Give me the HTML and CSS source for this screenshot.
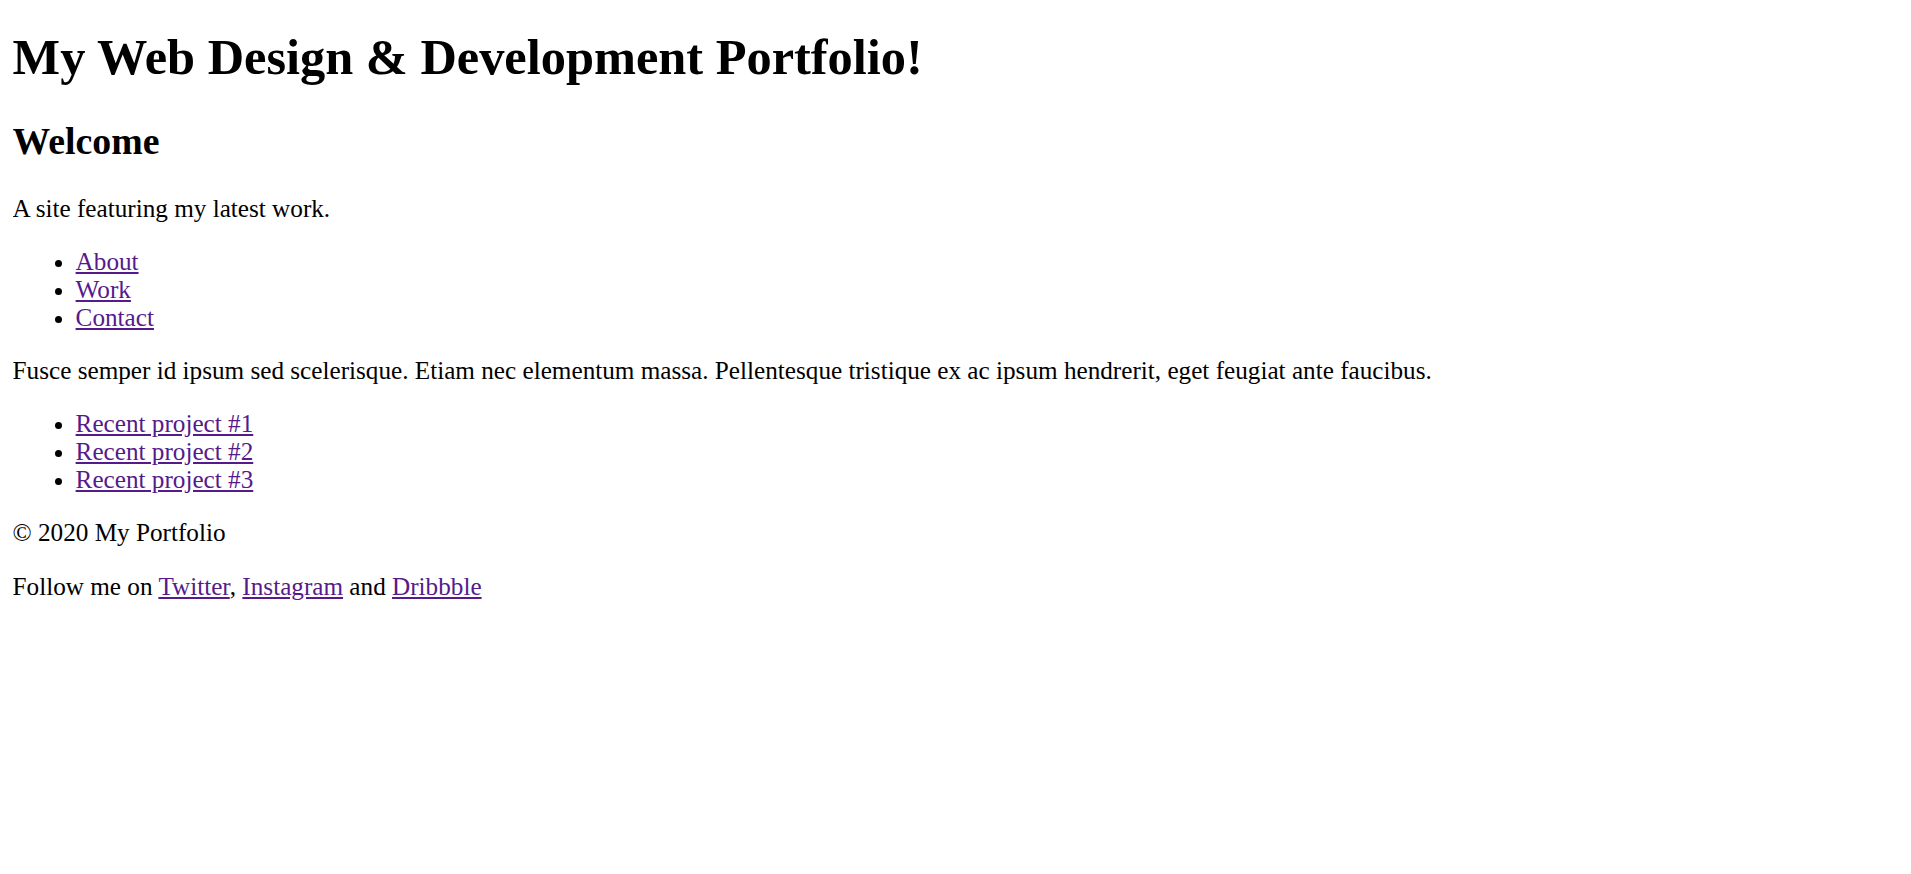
FILE: index.html
```html
<!DOCTYPE html>
<html lang="en">
<head>
<meta charset="utf-8">
<title>My Portfolio</title>
<link rel="stylesheet" href="styles.css">
</head>
<body class="page">
<header class="site-header">
<h1 class="title">My Web Design &amp; Development Portfolio!</h1>
<h2 class="subtitle">Welcome</h2>
<p class="text">A site featuring my latest work.</p>
<nav>
<ul class="list">
<li><a class="link" href="#about">About</a></li>
<li><a class="link" href="#work">Work</a></li>
<li><a class="link" href="#contact">Contact</a></li>
</ul>
</nav>
</header>
<main>
<p class="text">Fusce semper id ipsum sed scelerisque. Etiam nec elementum massa. Pellentesque tristique ex ac ipsum hendrerit, eget feugiat ante faucibus.</p>
<ul class="list">
<li><a class="link" href="#p1">Recent project #1</a></li>
<li><a class="link" href="#p2">Recent project #2</a></li>
<li><a class="link" href="#p3">Recent project #3</a></li>
</ul>
</main>
<footer>
<p class="text">&copy; 2020 My Portfolio</p>
<p class="text">Follow me on <a class="link" href="#twitter">Twitter</a>, <a class="link" href="#instagram">Instagram</a> and <a class="link" href="#dribbble">Dribbble</a></p>
</footer>
</body>
</html>
```
FILE: styles.css
```css
.page {
  margin: 12.6px;
  font-family: "Liberation Serif", "Times New Roman", serif;
  font-size: 25.2px;
  line-height: 28px;
  color: #000;
  background: #fff;
}
.title {
  font-size: 50.4px;
  line-height: 55.8px;
  font-weight: bold;
  margin: 17px 0 36px;
}
.subtitle {
  font-size: 37.8px;
  line-height: 41.8px;
  font-weight: bold;
  margin: 31.4px 0;
}
.text {
  margin: 25.2px 0;
}
.list {
  margin: 25.2px 0;
  padding-left: 63px;
}
.link {
  color: #551a8b;
}
```
